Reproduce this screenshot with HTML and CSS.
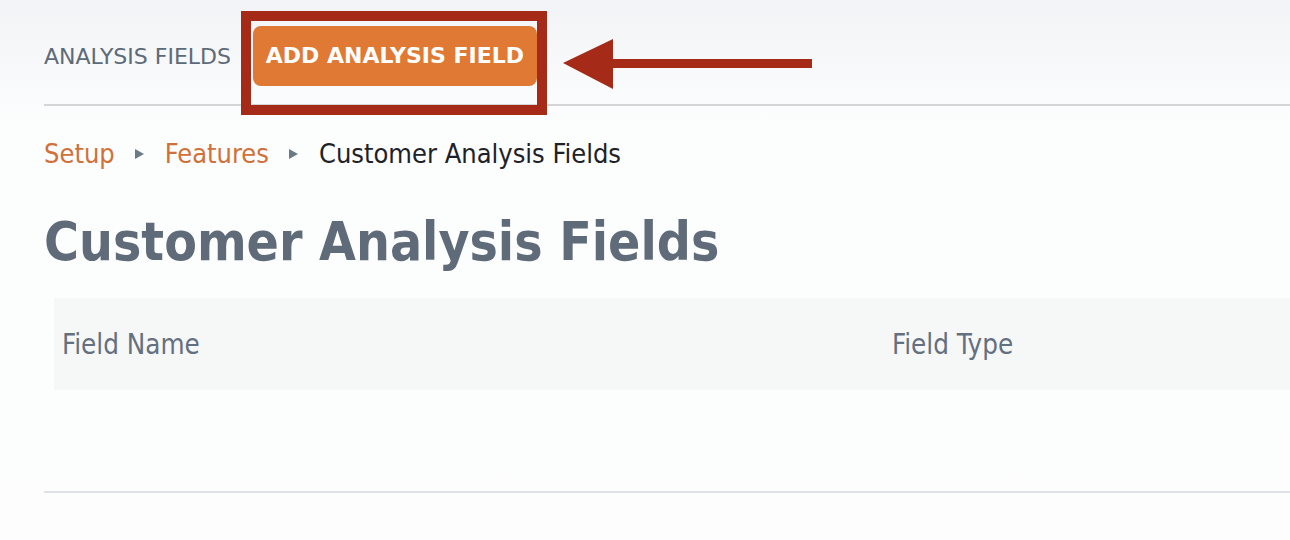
FILE: index.html
```html
<!DOCTYPE html>
<html lang="en">
<head>
    <meta charset="UTF-8">
    <title>Customer Analysis Fields</title>
    <link rel="stylesheet" href="styles.css">
</head>
<body>
    <div class="top-bar">
        <span class="section-label">ANALYSIS FIELDS</span>
        <a href="#" class="add-button">ADD ANALYSIS FIELD</a>

        <!-- annotation: highlight box + arrow -->
        <div class="callout-box"></div>
        <svg class="callout-arrow" width="250" height="50" viewBox="0 0 250 50">
            <polygon points="0,24 50,0 50,50" fill="#a62a18"/>
            <rect x="48" y="20" width="201" height="9" fill="#a62a18"/>
        </svg>
    </div>

    <div class="content">
        <nav class="breadcrumb">
            <a href="#">Setup</a>
            <span class="crumb-sep"></span>
            <a href="#">Features</a>
            <span class="crumb-sep"></span>
            <span class="current">Customer Analysis Fields</span>
        </nav>

        <h1 class="page-title">Customer Analysis Fields</h1>

        <div class="fields-table">
            <div class="table-head">
                <div class="col-name">Field Name</div>
                <div class="col-type">Field Type</div>
            </div>
            <div class="table-body"></div>
        </div>
    </div>
</body>
</html>
```

FILE: styles.css
```css
* {
    margin: 0;
    padding: 0;
    box-sizing: border-box;
}

body {
    font-family: 'DejaVu Sans Condensed', 'DejaVu Sans', sans-serif;
    background: linear-gradient(180deg, #f2f3f6 0px, #fcfdfd 120px, #fdfdfd 100%);
    min-height: 100vh;
    overflow: hidden;
}

.top-bar {
    position: relative;
    margin-left: 44px;
    height: 106px;
    padding-top: 8px;
    border-bottom: 2px solid #d4d5d6;
    display: flex;
    align-items: center;
}

.section-label {
    font-family: 'DejaVu Sans', sans-serif;
    color: #5d6a78;
    font-size: 22px;
    margin-right: 22px;
}

.add-button {
    display: inline-block;
    width: 284px;
    height: 60px;
    line-height: 60px;
    text-align: center;
    background: #df7934;
    color: #fff;
    font-family: 'DejaVu Sans', sans-serif;
    font-weight: bold;
    font-size: 22px;
    border-radius: 8px;
    text-decoration: none;
}

.callout-box {
    position: absolute;
    left: 197px;
    top: 11px;
    width: 306px;
    height: 104px;
    border: 10px solid #a62a18;
}

.callout-arrow {
    position: absolute;
    left: 519px;
    top: 39px;
}

.content {
    padding-left: 44px;
}

.breadcrumb {
    display: flex;
    align-items: center;
    margin-top: 30px;
    font-size: 27px;
    line-height: 36px;
}

.breadcrumb a {
    color: #d0703a;
    text-decoration: none;
}

.breadcrumb .current {
    color: #1e2228;
}

.crumb-sep {
    width: 0;
    height: 0;
    border-top: 5px solid transparent;
    border-bottom: 5px solid transparent;
    border-left: 9px solid #6c7a88;
    margin: 0 21px 0 20px;
}

.page-title {
    color: #5f6b79;
    font-size: 53px;
    font-weight: bold;
    margin-top: 38px;
    line-height: 64px;
}

.fields-table {
    margin-top: 24px;
}

.table-head {
    margin-left: 10px;
    height: 92px;
    background: #f6f8f8;
    display: flex;
    align-items: center;
    color: #646f80;
    font-size: 27.5px;
}

.col-name {
    width: 838px;
    padding-left: 8px;
}

.table-body {
    height: 103px;
    border-bottom: 2px solid #dfe1e5;
}
```
